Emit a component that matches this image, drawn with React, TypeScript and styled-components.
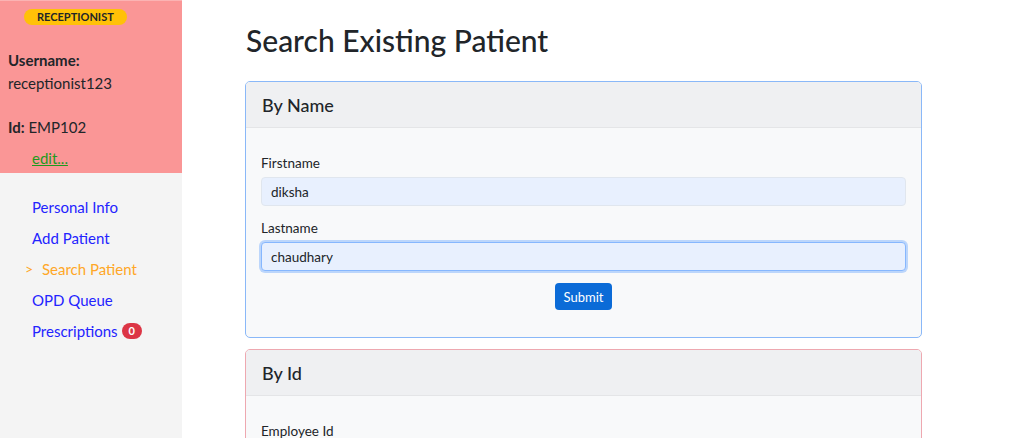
import React from "react";
import styled, { createGlobalStyle } from "styled-components";

const Global = createGlobalStyle`
  html, body { margin: 0; padding: 0; background: #fff; }
  body { font-family: Lato, "Noto Sans", sans-serif; color: #212529; }
  * { box-sizing: border-box; }
`;

const Page = styled.div`
  display: flex;
  width: 1022px;
  height: 438px;
  overflow: hidden;
`;

const Sidebar = styled.aside`
  width: 182px;
  flex: none;
  display: flex;
  flex-direction: column;
  background: #f4f4f4;
`;

const Profile = styled.div`
  height: 173px;
  background: #fa9696;
  border-top: 1px solid #fbb3b3;
  padding: 8px 8px 0 8px;
  display: flex;
  flex-direction: column;
`;

const RoleBadge = styled.span`
  align-self: flex-start;
  margin-left: 16px;
  background: #ffc107;
  color: #212529;
  font-size: 11px;
  font-weight: 700;
  line-height: 16px;
  padding: 0 13px;
  border-radius: 8px;
`;

const InfoLine = styled.div<{ $gap?: number }>`
  font-size: 15px;
  line-height: 23px;
  color: #212529;
  margin-top: ${(p) => p.$gap ?? 0}px;
`;

const Bold = styled.b`
  font-weight: 700;
`;

const EditLink = styled.a`
  margin-top: 8px;
  margin-left: 24px;
  font-size: 15px;
  line-height: 22px;
  color: #1e9a1e;
  text-decoration: underline;
`;

const Nav = styled.nav`
  display: flex;
  flex-direction: column;
  gap: 9px;
  padding: 23px 0 0 32px;
`;

const NavItem = styled.a<{ $active?: boolean }>`
  position: relative;
  font-size: 15px;
  line-height: 22px;
  color: ${(p) => (p.$active ? "#ffa726" : "#2323ff")};
  text-decoration: none;
  display: flex;
  align-items: center;
  gap: 4px;
  padding-left: ${(p) => (p.$active ? "10px" : "0")};
`;

const Arrow = styled.span`
  position: absolute;
  left: -7px;
  font-size: 14px;
`;

const CountBadge = styled.span`
  background: #dc3545;
  color: #fff;
  font-size: 11px;
  font-weight: 700;
  line-height: 16px;
  padding: 0 7px;
  border-radius: 8px;
`;

const Main = styled.main`
  flex: 1;
  padding: 20px 0 0 63px;
`;

const Title = styled.h1`
  margin: 0 0 21px 1px;
  font-size: 30px;
  font-weight: 500;
  line-height: 40px;
  color: #212529;
`;

const Card = styled.section<{ $border: string }>`
  width: 677px;
  border: 1px solid ${(p) => p.$border};
  border-radius: 5px;
  background: #f8f9fa;
  overflow: hidden;
  margin-bottom: 11px;
`;

const CardHeader = styled.header`
  height: 46px;
  background: #eff0f2;
  border-bottom: 1px solid #e4e5e7;
  padding: 0 16px;
  display: flex;
  align-items: center;
  font-size: 18px;
  font-weight: 500;
`;

const CardBody = styled.div`
  padding: 25px 15px 27px 15px;
  display: flex;
  flex-direction: column;
`;

const Label = styled.label`
  font-size: 13.5px;
  line-height: 20px;
  color: #212529;
  margin-bottom: 4px;
`;

const Input = styled.input<{ $focus?: boolean }>`
  height: 29px;
  width: 100%;
  background: #e8f0fe;
  border: 1px solid ${(p) => (p.$focus ? "#86b7fe" : "#e0e6ee")};
  border-radius: 4px;
  padding: 0 9px;
  font-family: inherit;
  font-size: 13.5px;
  color: #212529;
  outline: none;
  margin-bottom: 12px;
  box-shadow: ${(p) => (p.$focus ? "0 0 0 2px #bcd6fb" : "none")};
`;

const SubmitButton = styled.button`
  align-self: center;
  height: 27px;
  padding: 0 9px;
  background: #0b6bd7;
  color: #fff;
  border: none;
  border-radius: 4px;
  font-family: inherit;
  font-size: 13px;
`;

export default function App() {
  return (
    <>
      <Global />
      <Page>
        <Sidebar>
          <Profile>
            <RoleBadge>RECEPTIONIST</RoleBadge>
            <InfoLine $gap={24}>
              <Bold>Username:</Bold>
            </InfoLine>
            <InfoLine>receptionist123</InfoLine>
            <InfoLine $gap={21}>
              <Bold>Id:</Bold> EMP102
            </InfoLine>
            <EditLink href="#">edit...</EditLink>
          </Profile>
          <Nav>
            <NavItem href="#">Personal Info</NavItem>
            <NavItem href="#">Add Patient</NavItem>
            <NavItem href="#" $active>
              <Arrow>&gt;</Arrow>
              Search Patient
            </NavItem>
            <NavItem href="#">OPD Queue</NavItem>
            <NavItem href="#">
              Prescriptions <CountBadge>0</CountBadge>
            </NavItem>
          </Nav>
        </Sidebar>
        <Main>
          <Title>Search Existing Patient</Title>
          <Card $border="#8ab8f8">
            <CardHeader>By Name</CardHeader>
            <CardBody>
              <Label>Firstname</Label>
              <Input readOnly value="diksha" />
              <Label>Lastname</Label>
              <Input readOnly value="chaudhary" $focus />
              <SubmitButton>Submit</SubmitButton>
            </CardBody>
          </Card>
          <Card $border="#eea8b0">
            <CardHeader>By Id</CardHeader>
            <CardBody>
              <Label>Employee Id</Label>
              <Input readOnly value="" />
            </CardBody>
          </Card>
        </Main>
      </Page>
    </>
  );
}
